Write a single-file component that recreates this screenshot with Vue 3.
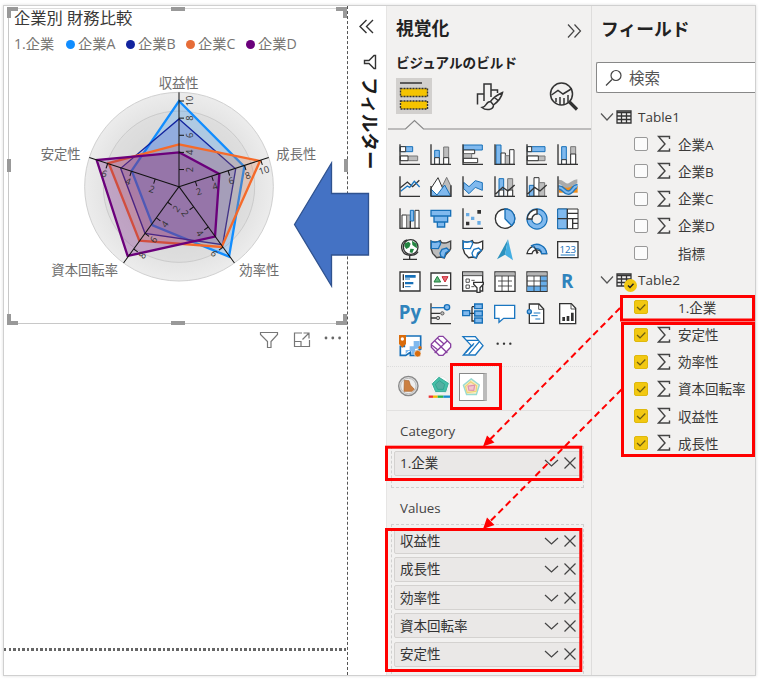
<script setup>
const legend = [
  { name: '企業A', cls: 'a' },
  { name: '企業B', cls: 'b' },
  { name: '企業C', cls: 'c' },
  { name: '企業D', cls: 'd' },
]

const series = [
  { cls: 'a', points: '447,93 643,290 597,560 368,466 305,302' },
  { cls: 'b', points: '447,147 617,297 578,524 345,490 272,295' },
  { cls: 'c', points: '447,223 690,273 575,531 328,512 236,279' },
  { cls: 'd', points: '447,247 568,312 555,500 293,558 200,270' },
]

// side is the side of the axis line on which ticks and numbers are drawn
const axes = [
  { angle: -90, step: 25.7, side: 1, labels: [2, 4, 6, 8, 10] },
  { angle: -18, step: 25.8, side: 1, labels: [2, 4, 6, 8, 10] },
  { angle: 54, step: 37.4, side: 1, labels: [2, 4, 6] },
  { angle: 126, step: 28.9, side: -1, labels: [2, 4, 6, 8] },
  { angle: 198, step: 37.5, side: -1, labels: [2, 4, 6] },
]

const rows = [
  { label: 'Table1', table: true },
  { label: '企業A', sum: true },
  { label: '企業B', sum: true },
  { label: '企業C', sum: true },
  { label: '企業D', sum: true },
  { label: '指標' },
  { label: 'Table2', table: true, used: true },
  { label: '1.企業', on: true },
  { label: '安定性', sum: true, on: true },
  { label: '効率性', sum: true, on: true },
  { label: '資本回転率', sum: true, on: true },
  { label: '収益性', sum: true, on: true },
  { label: '成長性', sum: true, on: true },
]

const wells = [
  { title: 'Category', items: ['1.企業'] },
  { title: 'Values', items: ['収益性', '成長性', '効率性', '資本回転率', '安定性'] },
]
</script>

<template>
  <div class="page">
    <div class="window">
      <main class="canvas">
        <section class="visual">
          <i class="corner tl"></i><i class="corner tr"></i>
          <i class="corner bl"></i><i class="corner br"></i>
          <i class="grip top"></i><i class="grip bottom"></i>
          <i class="grip left"></i><i class="grip right"></i>
          <h1>企業別 財務比較</h1>
          <div class="legend">
            <span class="legend-title">1.企業</span>
            <span v-for="l in legend" :key="l.name" class="legend-item"><i :class="['dot', l.cls]"></i>{{ l.name }}</span>
          </div>
          <svg class="radar" viewBox="0 0 900 660">
            <defs>
              <radialGradient id="disc">
                <stop offset="0.6" stop-color="#dcdcdc" />
                <stop offset="1" stop-color="#ececec" />
              </radialGradient>
            </defs>
            <circle cx="447" cy="350" r="283" fill="url(#disc)" stroke="#d0d0d0" stroke-width="3" />
            <circle cx="447" cy="350" r="227" fill="#d8d8d8" fill-opacity=".4" stroke="#cbcbcb" stroke-width="3" />
            <polygon v-for="s in series" :key="s.cls" :points="s.points" :class="['area', s.cls]" />
            <g v-for="a in axes" :key="a.angle" :transform="`translate(447 350) rotate(${a.angle})`">
              <path d="M0 0H283" class="axis" />
              <g v-for="n in a.labels" :key="n" :transform="`translate(${n * a.step} 0)`">
                <path :d="`M0 0V${15 * a.side}`" class="axis" />
                <text class="tick" :transform="`translate(0 ${33 * a.side}) rotate(${a.side < 0 ? 180 : 0})`" y="9">{{ n }}</text>
              </g>
            </g>
            <text class="label" x="446" y="53" text-anchor="middle">収益性</text>
            <text class="label" x="739" y="268">成長性</text>
            <text class="label" x="32" y="268">安定性</text>
            <text class="label" x="64" y="615">資本回転率</text>
            <text class="label" x="628" y="615">効率性</text>
          </svg>
        </section>
        <div class="actions">
          <svg width="20" height="18" viewBox="0 0 20 18"><path d="M1.500 1.500H18.500V3.500L12 10.500V16.500H8.500V10.500L1.500 3.500Z" /></svg>
          <svg width="18" height="18" viewBox="0 0 18 18"><path d="M9 2H1.500V15.500H16.500V9M10.500 2H16V7.500M16 2L9.500 8.500M1.500 10.500H8V15.500" /></svg>
          <svg width="18" height="18" viewBox="0 0 18 18"><g class="dots"><circle cx="2" cy="7" r="1.400" /><circle cx="8.800" cy="7" r="1.400" /><circle cx="15.600" cy="7" r="1.400" /></g></svg>
        </div>
        <div class="page-end"></div>
      </main>

      <aside class="filters">
        <svg width="16" height="16" viewBox="0 0 16 16"><path d="M7.500 1L1 7.500L7.500 14M14 1L7.500 7.500L14 14" /></svg>
        <svg class="funnel" width="16" height="16" viewBox="0 0 16 16"><path d="M13.500 1.500V14.500H12L7 9.500H2.500V6.500H7L12 1.500Z" /></svg>
        <span>フィルター</span>
      </aside>

      <section class="viz">
        <header>
          <h2>視覚化</h2>
          <svg width="16" height="16" viewBox="0 0 16 16"><path d="M2 1.500L8 8L2 14.500M8.500 1.500L14.500 8L8.500 14.500" /></svg>
        </header>
        <h3>ビジュアルのビルド</h3>
        <nav class="tabs">
          <span class="tab active">
            <svg viewBox="0 0 36 36"><path d="M4 5H26" stroke="#333" stroke-width="1.500" /><path d="M4.500 10.500H31.500V18.500H4.500ZM4.500 23H31.500V31H4.500Z" fill="#f5c400" stroke="#333" stroke-width="1.400" stroke-dasharray="2 1" /></svg>
          </span>
          <span class="tab">
            <svg viewBox="0 0 36 36"><path class="outline" d="M6.500 26.500V16H13M13 23V6H20V19M20 12H26.500V15" /><path class="outline" d="M31.500 14.500C27 16.500 22 20 19.500 23.500L22.500 27C26.500 24 30.500 19.500 31.500 14.500ZM19.500 23.500C14.500 23.500 16 29 11 29.500C15 33 22.500 32 22.500 27M23.500 19.500L27 22.500" /></svg>
          </span>
          <span class="tab">
            <svg viewBox="0 0 36 36"><circle class="outline" cx="16.500" cy="16" r="11" /><path class="outline" d="M6.500 17L13 12.500L18 16L27 10.500M11 20V24M15 19V27M19 20V27M23 17V24" /><path d="M24.500 24L32 31.500" stroke="#333" stroke-width="3.200" /></svg>
          </span>
        </nav>
        <svg class="notch" width="205" height="12" viewBox="0 0 205 12"><path d="M1 10H18.500L27.500 1.500L36.500 10H205" /></svg>

        <div class="gallery">
          <svg viewBox="0 0 66 66"><g class="k"><path class="b" d="M4 8H41V23H4Z" /><path class="w" d="M4 8H20V23H4Z" /><path class="g" d="M4 36H56V50H4Z" /><path class="w" d="M4 36H27V50H4Z" /><path d="M3 1V61H63" /></g></svg>
          <svg viewBox="0 0 66 66"><g class="k"><path class="b" d="M14 19H28V61H14Z" /><path class="w" d="M14 41H28V61H14Z" /><path class="g" d="M41 9H56V61H41Z" /><path class="w" d="M41 41H56V61H41Z" /><path d="M3 1V61H63" /></g></svg>
          <svg viewBox="0 0 66 66"><g class="k"><path class="b" d="M4 3H61V18H4Z" /><path class="w" d="M4 18H38V29H4Z" /><path class="g" d="M4 29H29V43H4Z" /><path class="w" d="M4 43H47V56H4Z" /><path d="M3 1V61H63" /></g></svg>
          <svg viewBox="0 0 66 66"><g class="k"><path class="b" d="M6 3H21V61H6Z" /><path class="w" d="M21 27H34V61H21Z" /><path class="g" d="M34 35H47V61H34Z" /><path class="w" d="M47 17H60V61H47Z" /><path d="M3 1V61H63" /></g></svg>
          <svg viewBox="0 0 66 66"><g class="k"><path class="b" d="M4 8H57V23H4Z" /><path class="w" d="M4 8H17V23H4Z" /><path class="g" d="M4 36H57V50H4Z" /><path class="w" d="M4 36H37V50H4Z" /><path d="M3 1V61H63" /></g></svg>
          <svg viewBox="0 0 66 66"><g class="k"><path class="b" d="M14 8H28V61H14Z" /><path class="w" d="M14 47H28V61H14Z" /><path class="g" d="M41 8H56V61H41Z" /><path class="w" d="M41 30H56V61H41Z" /><path d="M3 1V61H63" /></g></svg>

          <svg viewBox="0 0 66 66"><g class="k"><path d="M4 35L25 18L41 32L61 13" /><path class="bl" d="M5 46L25 30L32 34L46 16L62 33" /><path d="M3 1V61H63" /></g></svg>
          <svg viewBox="0 0 66 66"><g class="k"><path class="g" d="M33 38L50 4L62 29V60H33Z" /><path class="w" d="M3 37L24 5L48 60H3Z" /><path class="b" d="M3 39L21 57L44 27L62 60H3Z" /><path d="M3 30V61H63V28" /></g></svg>
          <svg viewBox="0 0 66 66"><g class="k"><path class="b" d="M5 19L21 32L40 14L61 20V43L40 34L21 53L5 38Z" /><path d="M3 1V61H63" /></g></svg>
          <svg viewBox="0 0 66 66"><g class="k"><path class="b" d="M15 8H29V61H15Z" /><path class="w" d="M15 42H29V61H15Z" /><path class="g" d="M41 8H56V61H41Z" /><path class="w" d="M41 42H56V61H41Z" /><path d="M5 54L26 34L42 45L62 27M3 1V61H63" /></g></svg>
          <svg viewBox="0 0 66 66"><g class="k"><path class="b" d="M10 28H24V61H10Z" /><path class="w" d="M24 5H39V61H24Z" /><path class="g" d="M39 20H56V61H39Z" /><path d="M5 54L26 34L42 45L62 27M3 1V61H63" /></g></svg>
          <svg viewBox="0 0 66 66"><path d="M6 30H62V50H6Z" fill="#f28c18" /><path d="M5 18C18 18 20 29 31 29S48 16 61 16" fill="none" stroke="#aaa" stroke-width="13" /><path d="M5 35C18 32 20 50 34 50S48 29 61 31" fill="none" stroke="#2378bd" stroke-width="14" /><path d="M5 35C18 32 20 50 34 50S48 29 61 31" fill="none" stroke="#80b9ee" stroke-width="6" /><path class="k" d="M3 1V61H63" /></svg>

          <svg viewBox="0 0 66 66"><g class="k"><path class="w" d="M9 21H23V61H9Z" /><path class="g" d="M23 21H34V61H23Z" /><path class="b" d="M34 7H44V39H34Z" /><path class="w" d="M48 7H60V61H48Z" /><path d="M3 1V61H63M34 39V61" /></g></svg>
          <svg viewBox="0 0 66 66"><path class="b" d="M3 7H62V24H3ZM12 24H53V42H12ZM22 42H44V57H22Z" /></svg>
          <svg viewBox="0 0 66 66"><path class="k" d="M3 1V61H63" /><path d="M12 15H22V25H12ZM27 26H37V36H27ZM46 39H56V50H46Z" fill="#69ace4" /><path d="M46 6H57V17H46ZM12 41H22V52H12Z" fill="#333" /></svg>
          <svg viewBox="0 0 66 66"><circle class="k w" cx="33" cy="32" r="29" /><path class="b" d="M33 3A29 29 0 0 1 53 53L33 32Z" /></svg>
          <svg viewBox="0 0 66 66"><circle cx="33" cy="33" r="23" fill="none" stroke="#1770b8" stroke-width="18" /><circle cx="33" cy="33" r="23" fill="none" stroke="#80b9ee" stroke-width="11" /><path class="k w" d="M4 33A29 29 0 0 1 33 4V18A15 15 0 0 0 18 33Z" /></svg>
          <svg viewBox="0 0 66 66"><g class="k"><path class="w" d="M2 3H63V62H2Z" /><path class="b" d="M2 3H31V62H2Z" /><path d="M2 32H63M31 3V62M31 16H63M47 32V62M47 46H63" /></g></svg>

          <svg viewBox="0 0 66 66"><path class="k" d="M24 3C0 9 3 47 32 49C44 50 53 45 57 38M32 49V60M12 61H54" /><circle class="k w" cx="35" cy="24" r="22" /><path d="M18 13L29 8L35 14L31 25L22 30L16 22ZM39 5L53 14L54 28L48 24L40 18ZM34 29L45 30L40 42L32 40Z" fill="#238541" /></svg>
          <svg viewBox="0 0 66 66"><path class="k g" d="M3 6C16 14 26 8 31 5L34 10C44 16 52 10 62 6V29C56 41 47 42 43 57L31 54L20 56L8 43L3 28Z" /><path class="b" d="M4 7C15 13 23 8 29 7L32 14L25 29L4 28ZM36 31L50 27L58 35L47 42L43 56L33 53L30 42Z" /></svg>
          <svg viewBox="0 0 66 66"><path class="k w" d="M3 6C16 14 26 8 31 5L34 10C44 16 52 10 62 6V29C56 41 47 42 43 57L31 54L20 56L8 43L3 28Z" /><path class="bl wfill" d="M4 7C15 13 23 8 29 7L32 14L25 29L4 28ZM36 31L50 27L58 35L47 42L43 56L33 53L30 42Z" /></svg>
          <svg viewBox="0 0 66 66"><path d="M42 1L9 61L33 47Z" fill="#2b91bd" /><path d="M42 1L57 64L33 47Z" fill="#43aee2" /></svg>
          <svg viewBox="0 0 66 66"><path class="k w" d="M3 44A30 30 0 0 1 62 44H47A15 15 0 0 0 18 44Z" /><path class="b" d="M17 20A30 30 0 0 1 62 44H47A15 15 0 0 0 29 29Z" /><path d="M22 17L38 41L32 46Z" fill="#333" /></svg>
          <svg viewBox="0 0 66 66"><path class="k w" d="M2 8H63V56H2Z" /><text class="digits" x="32" y="41" text-anchor="middle">123</text><path class="bl thin" d="M11 48H54" /></svg>

          <svg viewBox="0 0 66 66"><path class="k w" d="M3 3H63V60H3Z" /><path class="k" d="M13 10V28M13 33V51" /><path d="M18 12H50V20H18ZM18 33H43V40H18Z" fill="#1770b8" /><path d="M18 24H33M18 47H35" stroke="#1770b8" stroke-width="3" /></svg>
          <svg viewBox="0 0 66 66"><path class="k w" d="M3 6H62V55H3Z" /><path d="M12 33L22 16L32 33Z" fill="#66b980" stroke="#217f3d" stroke-width="3" /><path d="M36 17H54L45 33Z" fill="#e46b75" stroke="#cb2935" stroke-width="3" /><path class="k thin" d="M12 44H53" /></svg>
          <svg viewBox="0 0 66 66"><path class="k w" d="M2 3H62V60H2Z" /><path d="M3 4H61V14H3Z" fill="#b9b9b9" /><path class="k thin" d="M3 14H61M12 24H22V34H12ZM12 42H22V52H12ZM28 28H38M28 47H37" /><path class="k w" d="M35 34H64V40L54 50V64H45V50L35 40Z" /></svg>
          <svg viewBox="0 0 66 66"><path class="k w" d="M3 3H63V61H3Z" /><path d="M4 4H62V15H4Z" fill="#b5b5b5" /><path class="k thin" d="M3 15H63M12 30H54M12 45H54M24 15V60M43 15V60" /></svg>
          <svg viewBox="0 0 66 66"><path class="k w" d="M3 3H63V61H3Z" /><path d="M4 4H62V15H4Z" fill="#b5b5b5" /><path d="M43 15H62V60H4V45H43Z" fill="#67ade9" /><path class="k thin" d="M3 15H63M3 30H63M3 45H63M24 15V60M43 15V60" /></svg>
          <svg viewBox="0 0 66 66"><text class="word" x="12" y="50">R</text></svg>

          <svg viewBox="0 0 66 66"><text class="word" x="-1" y="48">Py</text></svg>
          <svg viewBox="0 0 66 66"><path class="k" d="M3 1V62H63M4 31H31M4 45H18" /><path class="bl" d="M4 14H45" /><circle class="b" cx="51" cy="13" r="8" /><circle class="k g thin" cx="37" cy="31" r="5" /><circle class="k g thin" cx="24" cy="45" r="5" /></svg>
          <svg viewBox="0 0 66 66"><path class="k" d="M22 31H39M30 11V54H39M30 11H39" /><path class="b" d="M2 23H23V38H2ZM38 3H61V17H38ZM38 24H61V39H38ZM38 45H61V60H38Z" /></svg>
          <svg viewBox="0 0 66 66"><path class="bl wfill" d="M2 7H62V46H29L15 58V46H2Z" /></svg>
          <svg viewBox="0 0 66 66"><path class="k w" d="M10 3H39L53 18V61H10Z" /><path class="k thin" d="M38 3V19H53" /><path class="bl thin" d="M23 30H43M16 38H35M28 48H43" /><circle class="b" cx="10" cy="26" r="6" /></svg>
          <svg viewBox="0 0 66 66"><path class="k w" d="M8 2H43L56 16V62H8Z" /><path class="k thin" d="M42 3V18H56" /><path d="M16 42H24V54H16ZM29 39H37V54H29ZM42 29H50V54H42Z" fill="#333" /></svg>

          <svg viewBox="0 0 66 66"><path d="M16 3H65V43L50 50L48 61H34V52L20 61H4V34H16Z" fill="#fff" stroke="#1770b8" stroke-width="5" /><path d="M20 58V45H32V34H44V18H62V40L48 42V58H36L38 48H28Z" fill="#80b9ee" /><path d="M0 0H21V27L10 38L0 27Z" fill="#d96c0c" /><circle cx="10" cy="12" r="5" fill="#fff" /><circle cx="56" cy="56" r="10" fill="#d96c0c" stroke="#f2f1f0" stroke-width="2" /><circle cx="63" cy="38" r="5" fill="#d96c0c" /></svg>
          <svg viewBox="0 0 66 66"><path class="purple wfill" d="M27 4H39L62 27V37L39 61H27L4 37V27Z" /><path class="purple" d="M14 17L33 35M52 17L14 54M33 35L52 54M22 9L43 28M5 30L24 45" /></svg>
          <svg viewBox="0 0 66 66"><path class="bl wfill" d="M3 5H40L63 32L40 60H4L28 32Z" /><path class="bl" d="M12 16H48M36 25L10 54M52 20L20 58M28 32H34" /></svg>
          <svg viewBox="0 0 66 66"><g fill="#333"><circle cx="11" cy="26" r="3.500" /><circle cx="30" cy="26" r="3.500" /><circle cx="49" cy="26" r="3.500" /></g></svg>
        </div>

        <div class="custom">
          <svg viewBox="0 0 66 66"><circle cx="31" cy="33" r="29" fill="#ddd" stroke="#888" stroke-width="4" /><circle cx="31" cy="33" r="23" fill="#eee" stroke="#aaa" stroke-width="2" /><path d="M19 16L33 17L37 30L49 43L42 49H18Z" fill="#cc8042" stroke="#a7642f" stroke-width="2" /></svg>
          <svg viewBox="0 0 66 66"><circle cx="34" cy="31" r="27" fill="#fbfbfb" stroke="#e4e4e4" stroke-width="2" /><path d="M30 7L58 25L50 50H20L10 26Z" fill="#45bfa8" stroke="#39ad98" stroke-width="3" /><path d="M31 17L47 28L43 43H26L19 28Z" fill="#5ba79e" fill-opacity=".6" stroke="#2a9a86" stroke-width="2" /><path d="M-1 65H12" stroke="#e33" stroke-width="7" /><path d="M12 65H26" stroke="#f7b900" stroke-width="7" /><path d="M26 65H43" stroke="#28b34b" stroke-width="7" /><path d="M43 65H64" stroke="#198ccf" stroke-width="7" /></svg>
          <span class="selected"><svg viewBox="0 0 66 66"><path d="M32 3L60 24L50 57H16L5 25Z" fill="#fdeec0" stroke="#9adbd2" stroke-width="5" /><path d="M30 13L51 27L49 46L18 51L12 29Z" fill="#fbd3c8" fill-opacity=".7" stroke="#ecd576" stroke-width="4" /><path d="M21 28L44 25L41 43L24 42Z" fill="#f3c6cd" stroke="#dd93b0" stroke-width="4" /></svg></span>
        </div>

        <div v-for="w in wells" :key="w.title" class="well">
          <h4>{{ w.title }}</h4>
          <div class="drop">
            <div v-for="item in w.items" :key="item" class="pill">
              <span>{{ item }}</span>
              <svg width="34" height="14" viewBox="0 0 34 14"><path d="M1 4L7.500 10L14 4M20.500 1.500L31.500 12.500M31.500 1.500L20.500 12.500" /></svg>
            </div>
          </div>
        </div>
      </section>

      <section class="fields">
        <h2>フィールド</h2>
        <div class="search">
          <svg width="18" height="18" viewBox="0 0 18 18"><circle cx="11" cy="6.500" r="5" /><path d="M7 10.500L1 16.500" /></svg>
          <span>検索</span>
        </div>
        <div class="tree">
          <div v-for="r in rows" :key="r.label" :class="['row', { table: r.table }]">
            <template v-if="r.table">
              <svg class="chev" width="14" height="10" viewBox="0 0 14 10"><path d="M1 1.500L7 8L13 1.500" /></svg>
              <span class="grid-icon">
                <svg width="16" height="14" viewBox="0 0 16 14"><path d="M1 1H15V13H1Z" /><path d="M1 2.500H15M1 6H15M1 9.500H15M5.500 3V13M10.500 3V13" /></svg>
                <i v-if="r.used" class="used"><svg width="13" height="13" viewBox="0 0 13 13"><path d="M4 6.500L6 8.500L9.500 4.800" /></svg></i>
              </span>
            </template>
            <template v-else>
              <span :class="['check', { on: r.on }]"><svg v-if="r.on" width="12" height="12" viewBox="0 0 12 12"><path d="M2 6L5 8.800L10.300 3.500" /></svg></span>
              <svg class="sigma" width="14" height="18" viewBox="0 0 14 18"><path v-if="r.sum" d="M12.500 4V1.500H1.500L8 9L1.500 16H12.500V13.500" /></svg>
            </template>
            <span class="name">{{ r.label }}</span>
          </div>
        </div>
      </section>
    </div>

    <svg class="notes" viewBox="0 0 760 684">
      <path class="big-arrow" d="M294.500 224.500L331.500 163V193.500H368.500V255H331.500V286Z" />
      <g class="boxes">
        <rect x="451.500" y="364.500" width="49" height="44" />
        <rect x="386.500" y="447.200" width="194.300" height="32.300" />
        <rect x="386.500" y="529.500" width="194.300" height="141" />
        <rect x="621.500" y="296.500" width="132" height="23.500" />
        <rect x="622.500" y="323.500" width="131" height="132" />
      </g>
      <path class="link" d="M620 308L489.500 440M621.500 389.500L489.500 522" />
      <path class="head" d="M483 446.500L487 435.500L494.500 442.500ZM483 529L487 517.500L494.500 525Z" />
    </svg>
  </div>
</template>

<style>
body { margin: 0; background: #fff; }
</style>

<style scoped>
* { box-sizing: border-box; }
.page { position: relative; width: 760px; height: 684px; padding: 5px 0 0 3px; overflow: hidden; font-family: "Open Sans", "Noto Sans CJK JP", sans-serif; color: #333; }
.window { display: flex; width: 753px; height: 671px; border: 1px solid #d0d0d0; box-shadow: 0 0 3px #ddd; background: #fff; }
h1, h2, h3, h4 { margin: 0; font-weight: 400; white-space: nowrap; }
svg { display: block; fill: none; flex: none; }

.canvas { width: 344px; display: flex; flex-direction: column; padding: 2px 0 0 4px; border-right: 1px dashed #555; }
.visual { position: relative; width: 339px; height: 316px; border: 1px solid #c8c8c8; border-right: 0; border-top-color: #ddd; padding-left: 5px; display: flex; flex-direction: column; }
.visual h1 { height: 21px; line-height: 18px; font-size: 16.300px; color: #3a3938; }
.legend { display: flex; height: 28px; align-items: center; font-size: 14.200px; line-height: 26px; color: #777572; white-space: nowrap; }
.legend-title { width: 52px; }
.legend-item { display: flex; align-items: center; gap: 3px; width: 60px; }
.dot { width: 9px; height: 9px; border-radius: 50%; }
.dot.a { background: #118dff; } .dot.b { background: #12239e; } .dot.c { background: #e66c37; } .dot.d { background: #6b007b; }
.radar { width: 300px; height: 220px; margin: 12px 0 0 15.500px; }
.area { stroke-width: 7; fill-opacity: .22; }
.area.a { stroke: #118dff; fill: #118dff; }
.area.b { stroke: #12239e; fill: #3246d0; }
.area.c { stroke: #f56a2a; fill: #e66c37; }
.area.d { stroke: #6b007b; fill: #6b007b; fill-opacity: .26; }
.axis { stroke: #111; stroke-width: 3; }
.tick { font-size: 28px; fill: #333; text-anchor: middle; }
.label { font-size: 40px; fill: #6e6e6e; }
.corner, .grip { position: absolute; z-index: 1; }
.corner { width: 11px; height: 11px; border: 0 solid #999; }
.tl { left: -2px; top: -2px; border-width: 4px 0 0 4px; }
.tr { right: 0; top: -2px; border-width: 4px 4px 0 0; }
.bl.corner { left: -2px; bottom: -2px; border-width: 0 0 4px 4px; }
.br { right: 0; bottom: -2px; border-width: 0 4px 4px 0; }
.grip { background: #999; }
.grip.top, .grip.bottom { left: 162px; width: 14px; height: 4px; }
.grip.top { top: -2px; } .grip.bottom { bottom: -2px; }
.grip.left, .grip.right { top: 150px; width: 4px; height: 13px; }
.grip.left { left: -2px; } .grip.right { right: -1px; }
.actions { display: flex; gap: 13.500px; justify-content: flex-end; padding: 7px 5px 0 0; }
.actions svg { stroke: #777; stroke-width: 1.200; }
.actions .dots { fill: #666; stroke: none; }
.page-end { margin: auto 0 24px -4px; height: 3px; background: repeating-linear-gradient(90deg, #666 0 2.500px, transparent 2.500px 4.530px); }

.filters { width: 38px; display: flex; flex-direction: column; align-items: center; padding-top: 13px; }
.filters svg { stroke: #333; stroke-width: 1.400; }
.filters .funnel { margin: 19px 0 0 5px; }
.filters span { margin: 7px 0 0 5px; writing-mode: vertical-rl; text-orientation: sideways; font-size: 18.600px; font-weight: 700; line-height: 20px; color: #1c1c1c; white-space: nowrap; }

.viz { width: 205px; background: #f2f1f0; border-left: 1px solid #e6e5e4; display: flex; flex-direction: column; overflow: hidden; }
.viz > * { flex: none; }
.viz header { display: flex; justify-content: space-between; align-items: center; height: 30px; padding: 0 9px 0 9px; margin-top: 10px; }
.viz header h2, .fields h2 { font-size: 17.800px; font-weight: 700; line-height: 24px; color: #222; }
.viz header h2 { margin-top: -6px; }
.viz header svg, .notch, .pill svg { stroke: #444; stroke-width: 1.200; }
.viz h3 { margin: 6px 0 0 9px; font-size: 13.600px; line-height: 22px; font-weight: 700; color: #222; }
.tabs { display: flex; justify-content: space-between; padding: 4px 10px 0 9px; }
.tab { width: 36px; height: 36px; }
.tab.active { background: #d2d0ce; }
.outline { stroke: #333; stroke-width: 1.500; }
.notch { margin-top: 5px; stroke: #888; }
.gallery { display: grid; grid-template-columns: repeat(6, 22px); grid-auto-rows: 22px; gap: 9.750px; padding: 13px 0 0 11.500px; }
.gallery svg { width: 22px; height: 22px; overflow: visible; }
.k { stroke: #333; stroke-width: 4; }
.k .b, .k .g, .k .w { stroke-width: 3; }
.b { fill: #80b9ee; stroke: #1770b8; stroke-width: 4; }
.g { fill: #bdbdbd; stroke: #777; }
.w, .wfill { fill: #fff; }
.k.g { stroke: #444; }
.k.thin { stroke-width: 2.500; }
.bl { stroke: #1a76c0; stroke-width: 4; }
.bl.thin { stroke-width: 3; }
.purple { stroke: #8840a0; stroke-width: 4; }
.digits { font-size: 29px; fill: #1770b8; }
.word { font-size: 56px; font-weight: 700; fill: #3083bc; }
.custom { display: flex; align-items: center; height: 45px; margin-top: 9px; padding: 0 0 5px 11px; gap: 9px; border-top: 1px dotted #ddd; border-bottom: 1px solid #e2e1e0; }
.custom > svg { width: 22px; height: 22px; overflow: visible; }
.selected { width: 28px; height: 28px; border: 1px solid #888; border-right: 4px solid #bbb; background: #fff; display: grid; place-items: center; margin-top: 3px; margin-left: -1px; }
.selected svg { width: 19px; height: 19px; }
.well h4 { height: 35px; line-height: 40px; padding-left: 13px; font-size: 13.300px; color: #444; }
.well + .well h4 { height: 36px; line-height: 41px; }
.drop { display: flex; flex-direction: column; gap: 3.300px; width: 193px; height: 42px; margin-left: 4px; padding: 4px 2px 0; border: 1px dashed #d0d0d0; }
.well:last-child .drop { height: 160px; }
.pill { display: flex; justify-content: space-between; align-items: center; flex: none; height: 25px; padding: 0 2px 0 5px; background: #eae8e7; border: 1px solid #d4d2d0; border-radius: 2px; font-size: 13.500px; line-height: 22px; }

.fields { width: 164px; background: #f2f1f0; border-left: 1px solid #dedddc; overflow: hidden; }
.fields h2 { margin: 11px 0 0 9px; }
.search { display: flex; align-items: center; gap: 6px; height: 31px; margin: 21px 0 0 4px; padding-left: 8px; border: 1px solid #888; border-right: 0; border-radius: 2px 0 0 2px; background: #fff; font-size: 15.500px; color: #555; }
.search svg { stroke: #444; stroke-width: 1.200; }
.tree { margin-top: 10.500px; }
.row { display: flex; align-items: center; height: 27.200px; padding-left: 42px; font-size: 13.500px; white-space: nowrap; color: #3b3a39; }
.name { margin-top: -1px; }
.row.table { padding-left: 8px; }
.chev { stroke: #555; stroke-width: 1.200; }
.grid-icon { position: relative; margin: 0 6px 0 2px; }
.grid-icon > svg { stroke: #333; stroke-width: 1.300; }
.used { position: absolute; left: 8px; top: 6px; width: 13px; height: 13px; border-radius: 50%; background: #f2c811; }
.used svg { stroke: #222; stroke-width: 1.500; }
.check { display: grid; place-items: center; width: 14px; height: 14px; border: 1px solid #999; border-radius: 2px; background: #fbfbfb; }
.check.on { background: #f2c811; border-color: #dfb90d; }
.check svg { stroke: #6b5b13; stroke-width: 1.200; }
.sigma { margin: 0 7px 0 9px; stroke: #444; stroke-width: 1.400; }

.notes { position: absolute; left: 0; top: 0; width: 760px; height: 684px; pointer-events: none; z-index: 2; }
.big-arrow { fill: #4472c4; stroke: #2f528f; stroke-width: 1.300; }
.boxes { stroke: #f00; stroke-width: 3; }
.link { stroke: #f00; stroke-width: 2; stroke-dasharray: 6.500 4; }
.head { fill: #f00; }
</style>
